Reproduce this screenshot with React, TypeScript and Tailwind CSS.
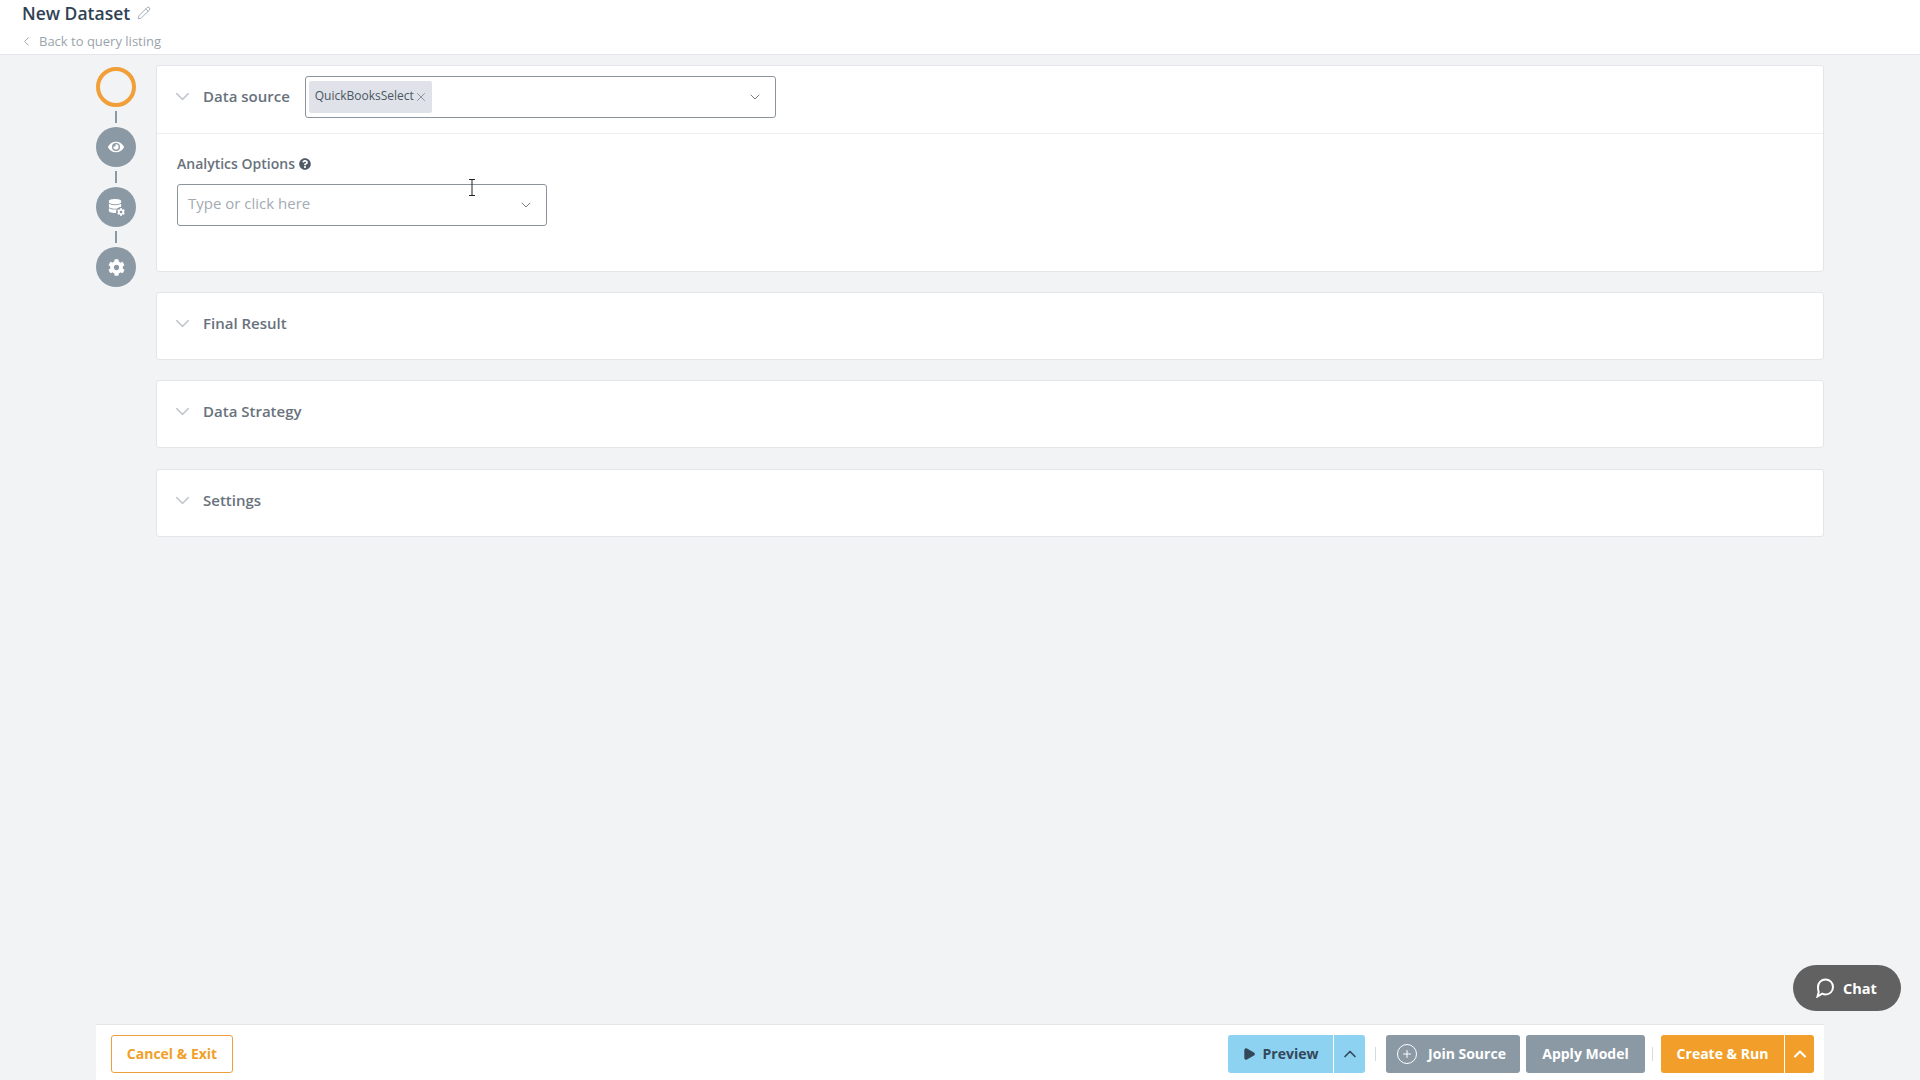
import React from 'react';
import { ChevronDown, ChevronLeft, ChevronUp, Pencil, X, Plus, Play } from 'lucide-react';
import { FaEye, FaCog, FaQuestionCircle, FaDatabase } from 'react-icons/fa';

const FONT = "font-['Open_Sans',sans-serif]";

const SECTIONS = ['Final Result', 'Data Strategy', 'Settings'];

const Connector = () => <div className="w-[2px] h-3 my-1 bg-[#8b99a5]" />;

const StepIcon = ({ children }: { children: React.ReactNode }) => (
    <div className="w-10 h-10 rounded-full bg-[#8b99a5] flex items-center justify-center text-white">{children}</div>
);

const Stepper = () => (
    <div className="w-10 flex flex-col items-center pt-[12px] shrink-0">
        <div className="w-10 h-10 rounded-full border-4 border-[#f19f38]" />
        <Connector />
        <StepIcon><FaEye size={16} /></StepIcon>
        <Connector />
        <StepIcon>
            <span className="relative w-4 h-4 block">
                <FaDatabase size={14} className="absolute left-0 top-0" />
                <span className="absolute -right-[2px] -bottom-[2px] w-[10px] h-[10px] rounded-full bg-[#8b99a5] flex items-center justify-center">
                    <FaCog size={8} />
                </span>
            </span>
        </StepIcon>
        <Connector />
        <StepIcon><FaCog size={17} /></StepIcon>
    </div>
);

const CollapsedCard = ({ title }: { title: string }) => (
    <div className="h-[68px] bg-white border border-[#e3e5e8] rounded-[3px] flex items-start pt-[20px] pl-[14px]">
        <ChevronDown size={23} strokeWidth={1.5} className="text-[#c2c8cd] -mt-[1px]" />
        <span className="ml-[9px] text-[15px] leading-[20px] font-semibold text-[#68727c]">{title}</span>
    </div>
);

const DataSourceCard = () => (
    <div className="h-[206.75px] bg-white border border-[#e3e5e8] rounded-[3px]">
        <div className="h-[68px] border-b border-[#eceef0] flex items-start pt-[10px] pl-[14px]">
            <ChevronDown size={23} strokeWidth={1.5} className="text-[#c2c8cd] mt-[9px]" />
            <span className="ml-[9px] mt-[10px] text-[15px] leading-[20px] font-semibold text-[#68727c]">Data source</span>
            <div className="ml-[15px] w-[471px] h-[42px] border border-[#8c949b] rounded-[3px] flex items-center pl-[3px] pr-[12px]">
                <div className="h-[32px] pl-[6px] pr-[4px] bg-[#dfe3e9] rounded-[2px] flex items-center text-[12px] text-[#4b5660]">
                    <span className="-mt-[2px]">QuickBooksSelect</span>
                    <X size={14} strokeWidth={1.25} className="text-[#6b7680]" />
                </div>
                <ChevronDown size={16} strokeWidth={1.5} className="ml-auto text-[#77818a]" />
            </div>
        </div>
        <div className="pt-[20px] pl-[20px]">
            <div className="flex items-center gap-[4px] text-[14px] leading-[19px] font-semibold text-[#68727c]">
                Analytics Options
                <FaQuestionCircle size={12} className="text-[#4f5b66]" />
            </div>
            <div className="mt-[11px] w-[370px] h-[42px] border border-[#8c949b] rounded-[3px] flex items-center pl-[10px] pr-[12px]">
                <span className="text-[15px] text-[#a3abb2] -mt-[3px]">Type or click here</span>
                <ChevronDown size={16} strokeWidth={1.5} className="ml-auto text-[#77818a]" />
            </div>
        </div>
    </div>
);

const Footer = () => (
    <div className="ml-[96px] mr-[96px] h-[56px] shrink-0 bg-white border-t border-[#e3e5e8] flex items-center pt-[2px] pl-[15px] pr-[10px] text-[14px] font-bold">
        <button className="w-[122px] h-[38px] border border-[#ec9f3e] rounded-[3px] text-[#f19f2a] bg-white">Cancel &amp; Exit</button>
        <div className="ml-auto flex items-center">
            <div className="w-[105px] h-[38px] bg-[#8dd2f0] rounded-l-[3px] flex items-center justify-center gap-[8px] text-[#33475b]">
                <Play size={14} fill="currentColor" className="-ml-[1px]" />
                <span className="-ml-[1px]">Preview</span>
            </div>
            <div className="w-[31px] h-[38px] ml-px bg-[#8dd2f0] rounded-r-[3px] flex items-center justify-center text-[#33475b]">
                <ChevronUp size={20} strokeWidth={2} />
            </div>
            <div className="w-px h-[14px] mx-[10px] bg-[#d8dbde]" />
            <div className="w-[134px] h-[38px] bg-[#8b99a5] rounded-[3px] flex items-center justify-center gap-[11px] text-white">
                <span className="w-[20px] h-[20px] -ml-[3px] rounded-full border border-white flex items-center justify-center">
                    <Plus size={12} strokeWidth={2} />
                </span>
                Join Source
            </div>
            <div className="w-[119px] h-[38px] ml-[6px] bg-[#8b99a5] rounded-[3px] flex items-center justify-center text-white">Apply Model</div>
            <div className="w-px h-[14px] mx-[7px] bg-[#d8dbde]" />
            <div className="w-[123px] h-[38px] ml-px bg-[#f19f2a] rounded-l-[3px] flex items-center justify-center text-white">Create &amp; Run</div>
            <div className="w-[29px] h-[38px] ml-px bg-[#f19f2a] rounded-r-[3px] flex items-center justify-center text-white">
                <ChevronUp size={20} strokeWidth={2.5} />
            </div>
        </div>
    </div>
);

const App: React.FC = () => (
    <div className={`relative h-screen flex flex-col overflow-hidden bg-[#f2f3f5] ${FONT}`}>
        <header className="h-[55px] shrink-0 bg-white border-b border-[#e3e5e8] pl-[22px]">
            <div className="flex items-center h-[26px] text-[17.5px] font-semibold text-[#2f4254]">
                New Dataset
                <Pencil size={14} strokeWidth={1.5} className="ml-[7px] -mt-[1px] text-[#97a0a8]" />
            </div>
            <div className="mt-[6px] flex items-center text-[13px] leading-[18px] text-[#9aa3ab]">
                <ChevronLeft size={15} strokeWidth={1.5} className="-ml-[3px]" />
                <span className="ml-[5px]">Back to query listing</span>
            </div>
        </header>

        <main className="flex-1 flex pl-[96px] pr-[96px] gap-[20px]">
            <Stepper />
            <div className="flex-1 pt-[10px] flex flex-col gap-[20.25px]">
                <DataSourceCard />
                {SECTIONS.map((title) => (
                    <CollapsedCard key={title} title={title} />
                ))}
            </div>
        </main>

        <Footer />

        <div className="absolute left-[1793px] top-[965px] w-[108px] h-[46px] rounded-[23px] bg-[#616161] flex items-center justify-center gap-[8px] text-[14.5px] font-bold text-white">
            <svg width="20" height="20" viewBox="0 0 20 20" fill="none" stroke="currentColor" strokeWidth="2" className="-ml-[2px]">
                <path d="M10.500 1.500c4.200 0 7.500 3.200 7.500 7.500s-3.300 7.500-7.500 7.500c-1.200 0-2.300-.3-3.300-.8L2.500 18.500l1.200-4.600C3.100 12.800 3 10.600 3 9c0-4.300 3.300-7.500 7.500-7.500z" />
            </svg>
            <span className="mt-[1px]">Chat</span>
        </div>

        {/* text cursor caught in the capture */}
        <svg className="absolute left-[468px] top-[179px]" width="8" height="17" viewBox="0 0 8 17" fill="none" stroke="#222" strokeWidth="1">
            <path d="M1 .5h6M4 .5v16M1 16.500h6" />
        </svg>
    </div>
);

export default App;
